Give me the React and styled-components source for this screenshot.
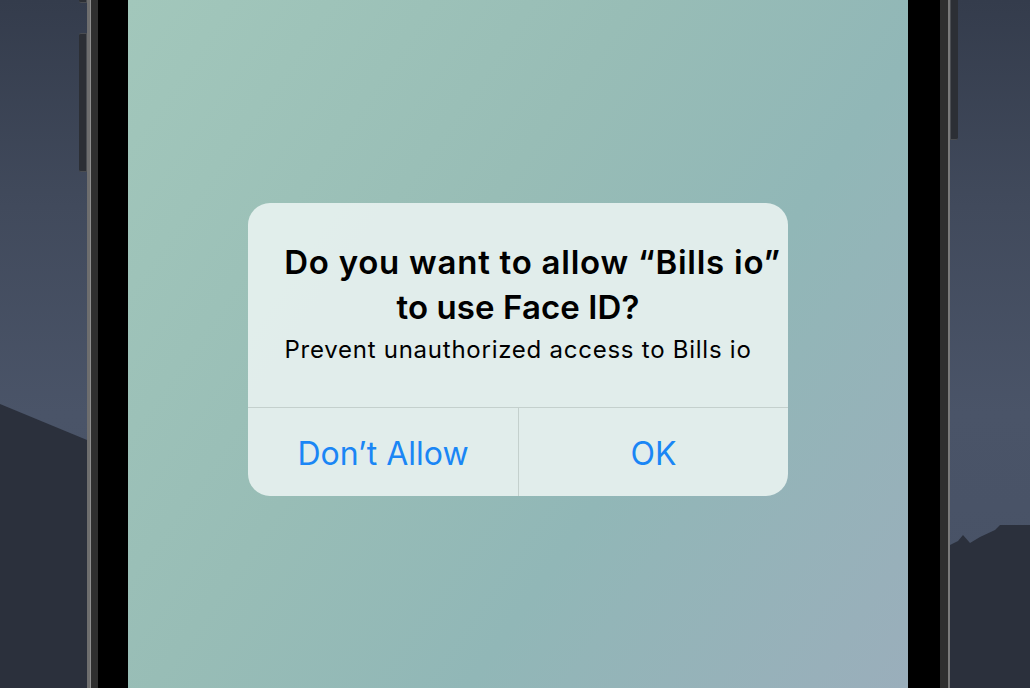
import React from "react";
import styled, { createGlobalStyle } from "styled-components";

const GlobalStyle = createGlobalStyle`
  html, body {
    margin: 0;
    padding: 0;
    background: #2a303c;
  }
  body {
    font-family: Inter, "Noto Sans", "Liberation Sans", sans-serif;
  }
`;

const Page = styled.div`
  display: flex;
  width: 1030px;
  height: 688px;
  overflow: hidden;
`;

const Desk = styled.div`
  position: relative;
  width: ${(p) => p.width}px;
  height: 100%;
  flex-shrink: 0;
  background: linear-gradient(180deg, #343c4c 0%, #414a5c 30%, #4a5468 60%, #475165 100%);
  overflow: hidden;

  svg {
    position: absolute;
    left: 0;
    top: 0;
  }
`;

const SideButton = styled.div`
  position: absolute;
  ${(p) => (p.side === "left" ? "right: 0;" : "left: 0;")}
  top: ${(p) => p.top}px;
  width: 8px;
  height: ${(p) => p.h}px;
  background: #2c2f35;
  border: 1px solid #4a4d52;
  border-${(p) => p.side}: none;
  border-radius: ${(p) => (p.side === "left" ? "2px 0 0 2px" : "0 2px 2px 0")};
  box-sizing: border-box;
`;

const Frame = styled.div`
  display: flex;
  flex-shrink: 0;
  height: 100%;
  border-left: 3px solid #6e6e6e;
  border-right: 2px solid #7a7a7a;
  box-shadow: inset 1px 0 0 #8e8e8e;
  background: #2f2f2f;
  padding: 0 8px;
`;

const Bezel = styled.div`
  display: flex;
  background: #000;
  padding: 0 32px 0 30px;
`;

const Screen = styled.div`
  width: 780px;
  height: 100%;
  display: flex;
  flex-direction: column;
  align-items: center;
  padding-top: 203px;
  box-sizing: border-box;
  background: linear-gradient(125deg, #a2c7bb 0%, #98bdb6 40%, #91b7b7 65%, #9aaebb 100%);
`;

const Alert = styled.div`
  width: 540px;
  border-radius: 22px;
  background: rgba(230, 240, 238, 0.94);
  overflow: hidden;
  display: flex;
  flex-direction: column;
`;

const Body = styled.div`
  padding: 37px 0 41px;
  text-align: center;
  color: #000;
`;

const TitleLine = styled.div`
  font-size: 33px;
  font-weight: 600;
  line-height: 45px;
  letter-spacing: ${(p) => p.spacing}px;
  padding-left: ${(p) => p.shift || 0}px;
  white-space: nowrap;
`;

const Message = styled.div`
  margin-top: 4px;
  font-size: 24px;
  line-height: 32px;
  letter-spacing: 0.75px;
  white-space: nowrap;
`;

const Actions = styled.div`
  display: grid;
  grid-template-columns: 1fr 1fr;
  border-top: 1px solid #c4d0cd;
  height: 88px;
`;

const Action = styled.button`
  border: none;
  background: transparent;
  font-family: inherit;
  font-size: 32px;
  color: #1a86f5;
  padding: 2px 0 0;
  cursor: pointer;
  & + & {
    border-left: 1px solid #c4d0cd;
  }
`;

export default function App() {
  return (
    <Page>
      <GlobalStyle />
      <Desk width={87}>
        <svg width="87" height="688" viewBox="0 0 87 688">
          <path d="M0 404 L87 440 L87 688 L0 688 Z" fill="#2b303c" />
        </svg>
        <SideButton side="left" top={-10} h={13} />
        <SideButton side="left" top={33} h={139} />
      </Desk>
      <Frame>
        <Bezel>
          <Screen>
            <Alert>
              <Body>
                <TitleLine spacing={0.75} shift={29}>
                  Do you want to allow “Bills io”
                </TitleLine>
                <TitleLine spacing={0.1}>to use Face ID?</TitleLine>
                <Message>Prevent unauthorized access to Bills io</Message>
              </Body>
              <Actions>
                <Action>Don’t Allow</Action>
                <Action>OK</Action>
              </Actions>
            </Alert>
          </Screen>
        </Bezel>
      </Frame>
      <Desk width={80}>
        <svg width="80" height="688" viewBox="0 0 80 688">
          <path
            d="M0 545 L8 541 L13 535 L20 543 L30 537 L45 530 L50 525 L80 525 L80 688 L0 688 Z"
            fill="#2b303c"
          />
        </svg>
        <SideButton side="right" top={-2} h={142} />
      </Desk>
    </Page>
  );
}
